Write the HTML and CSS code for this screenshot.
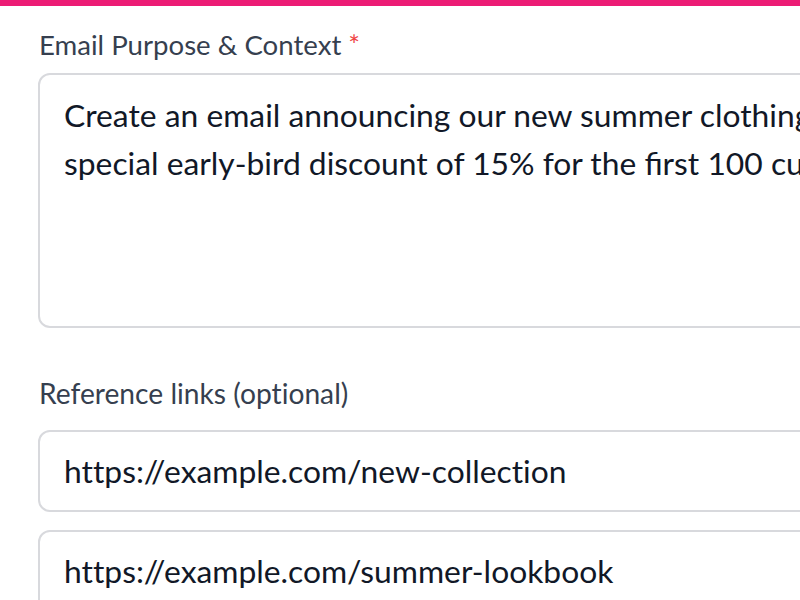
FILE: index.html
```html
<!DOCTYPE html>
<html lang="en">
<head>
<meta charset="utf-8">
<title>Email Form</title>
<link rel="stylesheet" href="styles.css">
</head>
<body>
<div class="topbar"></div>
<main class="form">
  <div class="field">
    <label class="label" for="purpose">Email Purpose &amp; Context <span class="req">*</span></label>
    <textarea id="purpose" class="textarea" wrap="off">Create an email announcing our new summer clothing collection, featuring a
special early-bird discount of 15% for the first 100 customers who order.</textarea>
  </div>
  <div class="field field-links">
    <label class="label label-links">Reference links (optional)</label>
    <div class="links">
      <input class="input" type="text" value="https://example.com/new-collection">
      <input class="input" type="text" value="https://example.com/summer-lookbook">
    </div>
  </div>
</main>
</body>
</html>
```
FILE: styles.css
```css
* { box-sizing: border-box; }
html, body {
  margin: 0;
  padding: 0;
  overflow: hidden;
  background: #ffffff;
}
body {
  font-family: Lato, "Noto Sans", sans-serif;
  width: 800px;
  height: 600px;
}
.topbar {
  height: 6px;
  background: #ec1c75;
}
.form {
  padding: 19px 0 0 38px;
  width: 1200px;
  display: flex;
  flex-direction: column;
}
.field {
  display: flex;
  flex-direction: column;
}
.label {
  font-size: 27.6px;
  line-height: 40px;
  color: #363f4f;
  padding-left: 1px;
  margin-bottom: 8px;
  font-variant-ligatures: none;
}
.req {
  color: #ef4444;
}
.textarea {
  font-family: inherit;
  font-size: 31.8px;
  line-height: 48px;
  color: #111827;
  height: 255px;
  padding: 16px 24px;
  border: 2px solid #d8d9dd;
  border-radius: 12px;
  resize: none;
  outline: none;
  overflow: hidden;
  white-space: pre;
  background: #fff;
}
.field-links {
  margin-top: 45px;
}
.label-links {
  font-size: 28.2px;
  margin-bottom: 17px;
}
.links {
  display: flex;
  flex-direction: column;
  gap: 18px;
}
.input {
  font-family: inherit;
  font-size: 31.8px;
  line-height: 48px;
  height: 82px;
  color: #111827;
  padding: 15px 24px;
  border: 2px solid #d8d9dd;
  border-radius: 12px;
  outline: none;
  background: #fff;
  font-variant-ligatures: none;
}
```
